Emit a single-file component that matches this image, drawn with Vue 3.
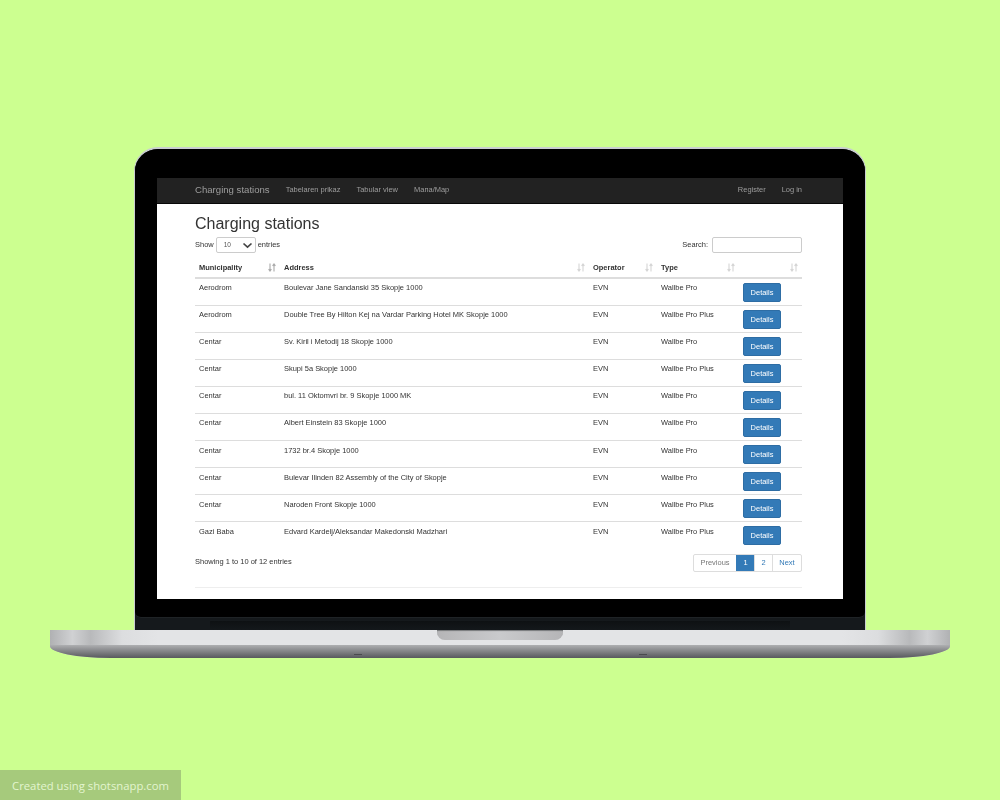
<template>
  <div class="page">
    <div class="lid">
      <div class="bezel">
        <div class="screen">
          <nav class="navbar">
            <a class="brand">Charging stations</a>
            <a class="nav-link">Tabelaren prikaz</a>
            <a class="nav-link">Tabular view</a>
            <a class="nav-link">Мапа/Map</a>
            <span class="spacer"></span>
            <a class="nav-link">Register</a>
            <a class="nav-link">Log in</a>
          </nav>
          <div class="content">
            <h2>Charging stations</h2>
            <div class="controls">
              <label class="length">
                Show
                <span class="select">10
                  <svg width="11" height="7" viewBox="0 0 11 7"><path d="M1.5 1.5 5.5 5.2 9.5 1.5" fill="none" stroke="#444" stroke-width="1.7" /></svg>
                </span>
                entries
              </label>
              <label class="search">Search: <span class="input"></span></label>
            </div>
            <table>
              <thead>
                <tr>
                  <th v-for="(col, i) in columns" :key="i" :style="{ width: col.width + 'px' }">
                    <div class="th-inner">
                      <span>{{ col.label }}</span>
                      <svg width="8" height="9" viewBox="0 0 8 9" :class="{ active: i === 0 }">
                        <path d="M2 0.5V8M0.6 6.2 2 8 3.4 6.2M6 8.5V1M4.6 2.8 6 1 7.4 2.8" fill="none" stroke="currentColor" stroke-width="1.1" />
                      </svg>
                    </div>
                  </th>
                </tr>
              </thead>
              <tbody>
                <tr v-for="(row, i) in rows" :key="i">
                  <td>{{ row[0] }}</td>
                  <td>{{ row[1] }}</td>
                  <td>EVN</td>
                  <td>{{ row[2] }}</td>
                  <td><a class="btn">Details</a></td>
                </tr>
              </tbody>
            </table>
            <div class="table-foot">
              <span class="info">Showing 1 to 10 of 12 entries</span>
              <div class="pagination">
                <a class="disabled">Previous</a>
                <a class="current">1</a>
                <a>2</a>
                <a class="next">Next</a>
              </div>
            </div>
            <hr />
          </div>
        </div>
      </div>
      <div class="hinge"></div>
    </div>
    <div class="base">
      <div class="notch"></div>
      <div class="base-front">
        <span class="foot"></span>
        <span class="foot"></span>
      </div>
    </div>
    <div class="credit">Created using shotsnapp.com</div>
  </div>
</template>

<script setup>
const columns = [
  { label: 'Municipality', width: 85 },
  { label: 'Address', width: 309 },
  { label: 'Operator', width: 68 },
  { label: 'Type', width: 82 },
  { label: '', width: 63 }
]

const rows = [
  ['Aerodrom', 'Boulevar Jane Sandanski 35 Skopje 1000', 'Wallbe Pro'],
  ['Aerodrom', 'Double Tree By Hilton Kej na Vardar Parking Hotel MK Skopje 1000', 'Wallbe Pro Plus'],
  ['Centar', 'Sv. Kiril i Metodij 18 Skopje 1000', 'Wallbe Pro'],
  ['Centar', 'Skupi 5a Skopje 1000', 'Wallbe Pro Plus'],
  ['Centar', 'bul. 11 Oktomvri br. 9 Skopje 1000 MK', 'Wallbe Pro'],
  ['Centar', 'Albert Einstein 83 Skopje 1000', 'Wallbe Pro'],
  ['Centar', '1732 br.4 Skopje 1000', 'Wallbe Pro'],
  ['Centar', 'Bulevar Ilinden 82 Assembly of the City of Skopje', 'Wallbe Pro'],
  ['Centar', 'Naroden Front Skopje 1000', 'Wallbe Pro Plus'],
  ['Gazi Baba', 'Edvard Kardelj/Aleksandar Makedonski Madzhari', 'Wallbe Pro Plus']
]
</script>

<style>
html, body {
  margin: 0;
  background: #ccff90;
}
</style>

<style scoped>
.page {
  position: relative;
  width: 1000px;
  height: 800px;
  padding-top: 147px;
  box-sizing: border-box;
  background: #ccff90;
  font-family: "Liberation Sans", Arial, sans-serif;
  color: #333;
  overflow: hidden;
}

.lid {
  width: 732px;
  height: 483px;
  margin-left: 134px;
  box-sizing: border-box;
  background: #15191c;
  border: solid #c9cdd0;
  border-width: 2px 1px 0;
  border-radius: 24px 24px 0 0;
  display: flex;
  flex-direction: column;
  overflow: hidden;
}

.bezel {
  height: 469px;
  flex: none;
  padding: 29px 22px 0;
  box-sizing: border-box;
  background: #000;
  border-bottom: 1px solid #1f2326;
  border-radius: 0 0 6px 6px;
}

.screen {
  width: 686px;
  height: 421px;
  background: #fff;
  overflow: hidden;
  filter: blur(0.35px);
}

.hinge {
  width: 580px;
  height: 9px;
  margin: 3px auto 0;
  background: linear-gradient(#0e1113, #14181b);
}

.navbar {
  height: 26px;
  padding: 0 41px 2px 38px;
  background: #222;
  border-bottom: 1px solid #080808;
  box-sizing: border-box;
  display: flex;
  align-items: center;
  gap: 16px;
  font-size: 7.47px;
  color: #9d9d9d;
}

.brand {
  font-size: 9.6px;
}

.spacer {
  flex: 1;
}

.content {
  padding: 0 41px 0 38px;
}

h2 {
  margin: 0;
  padding-top: 11px;
  font-size: 16px;
  line-height: 18px;
  font-weight: 500;
  color: #333;
}

.controls {
  height: 20px;
  margin-top: 2px;
  display: flex;
  justify-content: space-between;
  align-items: center;
  font-size: 7.47px;
}

.length, .search {
  display: flex;
  align-items: center;
  gap: 2px;
  line-height: 14px;
  padding-bottom: 1px;
}

.select {
  width: 40px;
  height: 16px;
  margin-bottom: -1px;
  padding-left: 7px;
  box-sizing: border-box;
  border: 1px solid #ccc;
  border-radius: 2px;
  display: flex;
  align-items: center;
  justify-content: space-between;
  font-size: 6.5px;
  color: #555;
}

.select svg {
  margin-right: 2px;
}

.input {
  display: block;
  width: 90px;
  height: 16px;
  margin-left: 2px;
  margin-bottom: -1px;
  border: 1px solid #ccc;
  border-radius: 2px;
  box-sizing: border-box;
}

table {
  width: 607px;
  margin-top: 3px;
  border-collapse: collapse;
  table-layout: fixed;
  font-size: 7.47px;
}

th {
  height: 20px;
  padding: 0 4px;
  border-bottom: 2px solid #ddd;
  box-sizing: border-box;
  text-align: left;
  color: #333;
}

.th-inner {
  display: flex;
  justify-content: space-between;
  align-items: center;
}

.th-inner svg {
  flex: none;
  color: #d5d5d5;
}

.th-inner svg.active {
  color: #aaa;
}

td {
  height: 27.11px;
  padding: 3.4px 4px 0;
  border-bottom: 1px solid #ddd;
  box-sizing: border-box;
  vertical-align: top;
  line-height: 11px;
}

.btn {
  display: block;
  width: 38px;
  height: 19px;
  margin-top: 0.6px;
  box-sizing: border-box;
  background: #337ab7;
  border: 1px solid #2e6da4;
  border-radius: 2px;
  color: #fff;
  text-align: center;
  line-height: 17px;
}

tr:last-child td {
  border-bottom: 0;
}

.table-foot {
  margin-top: 5px;
  display: flex;
  justify-content: space-between;
  align-items: flex-start;
  font-size: 7.47px;
}

.info {
  padding-top: 3px;
}

.pagination {
  height: 18px;
  display: flex;
  border: 1px solid #ddd;
  border-radius: 2px;
  box-sizing: border-box;
}

.pagination a {
  width: 18px;
  line-height: 16px;
  box-sizing: border-box;
  text-align: center;
  color: #337ab7;
  border-left: 1px solid #ddd;
}

.pagination a:first-child {
  border-left: 0;
}

.pagination a.disabled {
  width: 42px;
  color: #777;
}

.pagination a.next {
  width: 29px;
}

.pagination a.current {
  background: #337ab7;
  color: #fff;
  border-left-color: #337ab7;
}

hr {
  margin: 15px 0 0;
  border: 0;
  border-top: 1px solid #eee;
}

.base {
  width: 900px;
  height: 28px;
  margin-left: 50px;
  background: linear-gradient(90deg, #b0b1b3 0, #d0d1d3 2.5%, #b8b9bb 4.5%, #dcdddf 8%, #e3e4e6 12%, #e3e4e6 88%, #dcdddf 92%, #b8b9bb 95.5%, #d0d1d3 97.5%, #b0b1b3 100%);
  overflow: hidden;
  border-radius: 0 0 60px 60px / 0 0 12px 12px;
}

.notch {
  width: 126px;
  height: 10px;
  margin: 0 auto;
  background: linear-gradient(90deg, #b5b5b7, #c9cacc 50%, #b5b5b7);
  border-radius: 0 0 8px 8px;
  box-shadow: inset 0 1px 1px #77797c;
}

.base-front {
  height: 13px;
  margin-top: 5px;
  padding: 9px 303px 0 304px;
  box-sizing: border-box;
  background: linear-gradient(#aeafb1, #8a8b8e 40%, #58595d);
  display: flex;
  justify-content: space-between;
}

.foot {
  width: 8px;
  height: 1px;
  background: #4a4b4e;
}

.credit {
  position: absolute;
  left: 0;
  bottom: 0;
  width: 181px;
  height: 30px;
  background: #a6ca7c;
  color: #e3f5cf;
  font-family: "Open Sans", sans-serif;
  font-size: 11.3px;
  line-height: 31px;
  text-align: center;
}
</style>
